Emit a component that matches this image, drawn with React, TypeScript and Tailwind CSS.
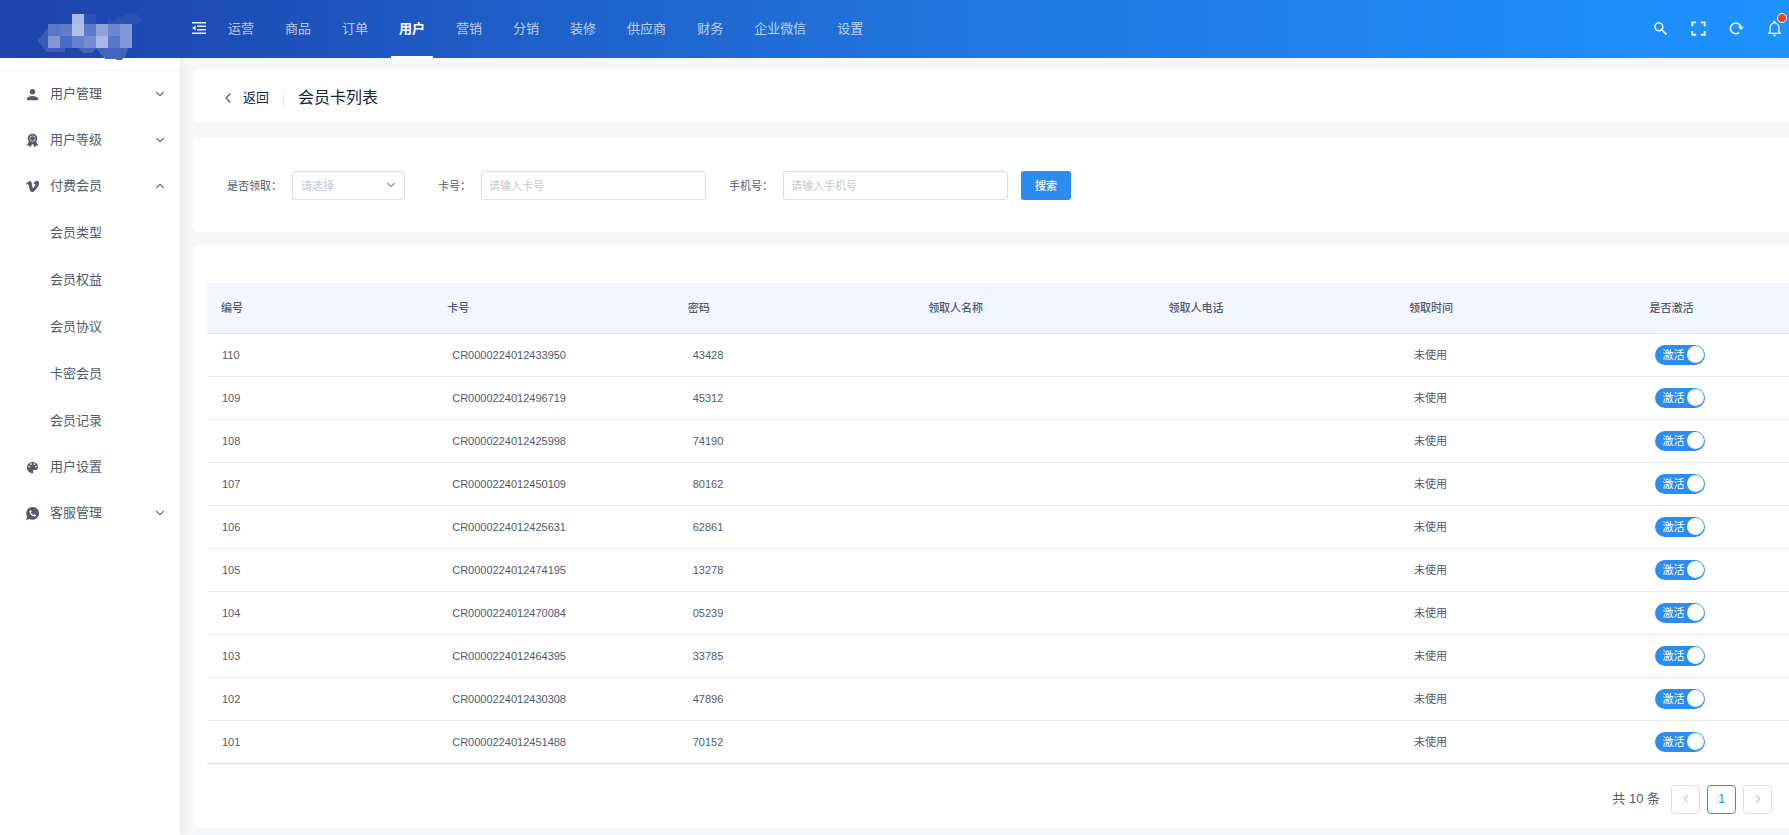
import { useState } from "react";
import {
  IoMdPerson,
  IoLogoVimeo,
  IoMdColorPalette,
  IoLogoWhatsapp,
  IoIosArrowDown,
  IoIosArrowUp,
  IoIosArrowBack,
  IoIosArrowForward,
  IoMdSearch,
  IoMdExpand,
  IoMdNotificationsOutline,
} from "react-icons/io";

const navItems = ["运营", "商品", "订单", "用户", "营销", "分销", "装修", "供应商", "财务", "企业微信", "设置"];

function RibbonIcon({ size }: { size: number }) {
  return (
    <svg width={size} height={size} viewBox="0 0 14 14" fill="currentColor" aria-hidden="true">
      <path d="M3.6 8.2L1.4 12L3.6 11.7L4.8 13.4L7 10L9.2 13.4L10.4 11.7L12.6 12L10.4 8.2Z" />
      <circle cx="7" cy="5.2" r="4.5" />
      <circle cx="7" cy="5.2" r="2.5" fill="none" stroke="#fff" strokeOpacity="0.75" strokeWidth="0.8" />
    </svg>
  );
}

const menu = [
  { label: "用户管理", icon: IoMdPerson, arrow: "down" },
  { label: "用户等级", icon: RibbonIcon, arrow: "down" },
  {
    label: "付费会员",
    icon: IoLogoVimeo,
    arrow: "up",
    children: ["会员类型", "会员权益", "会员协议", "卡密会员", "会员记录"],
  },
  { label: "用户设置", icon: IoMdColorPalette, arrow: "" },
  { label: "客服管理", icon: IoLogoWhatsapp, arrow: "down" },
];

const cards = [
  { id: 110, no: "CR0000224012433950", pwd: "43428" },
  { id: 109, no: "CR0000224012496719", pwd: "45312" },
  { id: 108, no: "CR0000224012425998", pwd: "74190" },
  { id: 107, no: "CR0000224012450109", pwd: "80162" },
  { id: 106, no: "CR0000224012425631", pwd: "62861" },
  { id: 105, no: "CR0000224012474195", pwd: "13278" },
  { id: 104, no: "CR0000224012470084", pwd: "05239" },
  { id: 103, no: "CR0000224012464395", pwd: "33785" },
  { id: 102, no: "CR0000224012430308", pwd: "47896" },
  { id: 101, no: "CR0000224012451488", pwd: "70152" },
];

const logoCells: [number, number, number, number, string][] = [
  [72, 14, 12, 10, "#a9b8e6"],
  [84, 14, 12, 10, "#2c52b6"],
  [48, 24, 12, 12, "#5b78c8"],
  [60, 24, 12, 12, "#607dcb"],
  [72, 24, 12, 12, "#b0bee8"],
  [84, 24, 12, 12, "#5d7bca"],
  [96, 24, 12, 12, "#8fa3da"],
  [108, 24, 12, 12, "#6c86d0"],
  [120, 24, 12, 12, "#8098d6"],
  [48, 36, 12, 12, "#8296d5"],
  [60, 36, 12, 12, "#4b6bc3"],
  [72, 36, 12, 12, "#6682cd"],
  [84, 36, 12, 12, "#738cd1"],
  [96, 36, 12, 12, "#a8b7e5"],
  [108, 36, 12, 12, "#5877c8"],
  [120, 36, 12, 12, "#8299d7"],
];

function Logo() {
  return (
    <svg className="h-[62px] w-[180px] shrink-0 self-start" viewBox="0 0 180 62" shapeRendering="crispEdges" aria-label="Logo" role="img">
      <path d="M38 40L50 26L54 24V48H65V52H46L45 50L42 47Z" fill="#3a5cb9" />
      <path d="M108 24V19L112 22L118 17L124 17L126 14L132 13L138 15L141 20V23L132 24Z" fill="#2c51b5" />
      <path d="M65 44L78 48L84 53H91L96 48L100 53L105 59H115L116 60H121L126 55L128 48L132 46V44Z" fill="#4465bf" />
      {logoCells.map(([x, y, w, h, fill]) => (
        <rect key={`${x}-${y}`} x={x} y={y} width={w} height={h} fill={fill} />
      ))}
    </svg>
  );
}

function CollapseIcon() {
  return (
    <svg width="14" height="12" viewBox="0 0 14 12" fill="currentColor" aria-hidden="true">
      <path d="M0 0H14V1.6H0ZM5 3.5H14V5.1H5ZM5 7H14V8.6H5ZM0 10.4H14V12H0ZM0 6L3.6 3.4V8.6Z" />
    </svg>
  );
}

function RefreshIcon() {
  return (
    <svg width="15" height="14" viewBox="0 0 15 14" fill="none" aria-hidden="true">
      <path d="M10 11.6A5.3 5.3 0 1 1 12 6.6" stroke="currentColor" strokeWidth="1.5" />
      <path d="M9 5.8H15L12 9Z" fill="currentColor" />
    </svg>
  );
}

function ActiveSwitch({ id }: { id: number }) {
  const [on, setOn] = useState(true);
  return (
    <button
      type="button"
      role="switch"
      aria-checked={on}
      aria-label={`是否激活 ${id}`}
      onClick={() => setOn(!on)}
      className={
        on
          ? "flex h-5 w-[50px] items-center justify-between rounded-full bg-[#2d8cf0] pr-px pl-[7px] text-white"
          : "flex h-5 w-[50px] flex-row-reverse items-center justify-between rounded-full bg-[#c5c8ce] pr-[7px] pl-px text-white"
      }
    >
      <span>{on ? "激活" : "冻结"}</span>
      <span className="size-[17px] rounded-full bg-white" />
    </button>
  );
}

function Header() {
  return (
    <header className="relative z-10 flex h-[58px] shrink-0 bg-linear-to-r from-[#1d42ab] via-[#2173dc] to-[#1e93ff]">
      <Logo />
      <button type="button" aria-label="收起菜单" className="ml-3 flex w-[14px] items-center pb-0.5 text-white/90">
        <CollapseIcon />
      </button>
      <nav className="ml-[14px] flex gap-[15px]">
        {navItems.map((item) => (
          <a
            key={item}
            href="#"
            className={
              item === "用户"
                ? "flex items-center border-b-2 border-white px-2 pt-0.5 text-[13px] font-bold whitespace-nowrap text-white"
                : "flex items-center border-b-2 border-transparent px-2 pt-0.5 text-[13px] whitespace-nowrap text-white/70"
            }
          >
            {item}
          </a>
        ))}
      </nav>
      <div className="ml-auto flex items-center gap-[22px] pr-[7px] pb-0.5 text-white/95">
        <button type="button" aria-label="搜索菜单" className="flex size-4 items-center justify-center">
          <IoMdSearch size={17} className="shrink-0" />
        </button>
        <button type="button" aria-label="全屏" className="flex size-4 items-center justify-center">
          <IoMdExpand size={19} className="shrink-0" />
        </button>
        <button type="button" aria-label="刷新" className="flex size-4 items-center justify-center">
          <RefreshIcon />
        </button>
        <button type="button" aria-label="通知" className="relative flex size-4 items-center justify-center">
          <IoMdNotificationsOutline size={19} className="shrink-0" />
          <span className="absolute -top-[7px] left-[11px] size-[10px] rounded-full border border-white bg-[#ed4014]" />
        </button>
      </div>
    </header>
  );
}

function Sidebar() {
  return (
    <aside className="z-[5] w-[180px] shrink-0 bg-white pt-3 text-[13px] text-[#515a6e] shadow-[2px_0_10px_rgba(29,35,41,0.08)]">
      <ul className="border-t border-[#f3f4f6]">
        {menu.map(({ label, icon: Icon, arrow, children }) => (
          <li key={label}>
            <a href="#" className="flex h-[46px] items-center pr-[14px] pl-[25px]">
              <Icon size={15} />
              <span className="ml-[10px] flex-1">{label}</span>
              {arrow === "down" && <IoIosArrowDown size={12} />}
              {arrow === "up" && <IoIosArrowUp size={12} />}
            </a>
            {children && (
              <ul>
                {children.map((child) => (
                  <li key={child}>
                    <a href="#" className="flex h-[47px] items-center pl-[50px]">
                      {child}
                    </a>
                  </li>
                ))}
              </ul>
            )}
          </li>
        ))}
      </ul>
    </aside>
  );
}

function FilterForm() {
  const field =
    "h-[29px] w-[225px] rounded-[3px] border border-[#dcdee2] bg-white px-[7px] outline-none placeholder:text-[#c5c8ce]";
  return (
    <form
      onSubmit={(e) => e.preventDefault()}
      className="flex items-start rounded-l-[5px] bg-white pt-[33px] pb-8 pl-[34px] whitespace-nowrap"
    >
      <div className="flex items-center gap-[10px]">
        <label htmlFor="received">是否领取：</label>
        <div className="relative">
          <select
            id="received"
            defaultValue=""
            className="h-[29px] w-[113px] appearance-none rounded-[3px] border border-[#dcdee2] bg-white px-2 text-[#c5c8ce] outline-none"
          >
            <option value="">请选择</option>
            <option value="1">已领取</option>
            <option value="0">未领取</option>
          </select>
          <IoIosArrowDown size={12} className="pointer-events-none absolute top-2 right-2 text-[#808695]" />
        </div>
      </div>
      <div className="ml-[33px] flex items-center gap-[10px]">
        <label htmlFor="cardNo">卡号：</label>
        <input id="cardNo" type="text" placeholder="请输入卡号" className={field} />
      </div>
      <div className="ml-[23px] flex items-center gap-[10px]">
        <label htmlFor="phone">手机号：</label>
        <input id="phone" type="text" placeholder="请输入手机号" className={field} />
      </div>
      <button type="submit" className="ml-[13px] h-[29px] w-[50px] rounded-[3px] bg-[#2d8cf0] font-medium text-white">
        搜索
      </button>
    </form>
  );
}

function CardTable() {
  return (
    <table className="w-full table-fixed border-collapse text-left">
      <thead>
        <tr className="h-[50px] border-b border-[#e8eaec] bg-[#f2f7ff]">
          <th className="w-[14.3%] pl-[14px] font-medium">编号</th>
          <th className="w-[15.2%] pl-[14px] font-medium">卡号</th>
          <th className="w-[15.2%] pl-[14px] font-medium">密码</th>
          <th className="w-[15.2%] pl-[14px] font-medium">领取人名称</th>
          <th className="w-[15.2%] pl-[14px] font-medium">领取人电话</th>
          <th className="w-[15.2%] pl-[14px] font-medium">领取时间</th>
          <th className="pl-[14px] font-medium">是否激活</th>
        </tr>
      </thead>
      <tbody>
        {cards.map((card) => (
          <tr key={card.id} className="h-[43px] border-b border-[#e8eaec] last:border-[#dcdee2]">
            <td className="pl-[15px]">{card.id}</td>
            <td className="pl-[19px]">{card.no}</td>
            <td className="pl-[19px]">{card.pwd}</td>
            <td />
            <td />
            <td className="pl-[19px]">未使用</td>
            <td className="pl-5">
              <ActiveSwitch id={card.id} />
            </td>
          </tr>
        ))}
      </tbody>
    </table>
  );
}

function Pagination() {
  const box = "flex size-[29px] items-center justify-center rounded-[4px] border bg-white";
  return (
    <div className="mt-[21px] flex items-center justify-end gap-[7px] pr-[17px] text-[13px]">
      <span className="mr-1">共 10 条</span>
      <button type="button" disabled aria-label="上一页" className={`${box} border-[#dcdee2] text-[#c5c8ce]`}>
        <IoIosArrowBack size={12} />
      </button>
      <button type="button" aria-current="page" className={`${box} border-[#2d8cf0] text-[#2d8cf0]`}>
        1
      </button>
      <button type="button" disabled aria-label="下一页" className={`${box} border-[#dcdee2] text-[#c5c8ce]`}>
        <IoIosArrowForward size={12} />
      </button>
    </div>
  );
}

export default function App() {
  return (
    <div className="flex min-h-screen flex-col bg-[#f5f7f9] font-['Liberation_Sans','Noto_Sans_CJK_SC',sans-serif] text-[11px] leading-4 text-[#515a6e]">
      <Header />
      <div className="flex flex-1">
        <Sidebar />
        <main className="min-w-0 flex-1 pt-3 pb-[7px] pl-[13px]">
          <div className="flex h-[53px] items-center rounded-l-[5px] bg-white pt-0.5 pl-7">
            <a href="#" className="flex items-center text-[13px] text-[#17233d]">
              <IoIosArrowBack size={14} className="mr-2 text-[#515a6e]" />
              返回
            </a>
            <span className="mx-[14px] h-4 w-px bg-[#e8eaec]" />
            <h1 className="text-base text-[#17233d]">会员卡列表</h1>
          </div>
          <div className="mt-[15px]">
            <FilterForm />
          </div>
          <section className="mt-[14px] rounded-l-[5px] bg-white pt-[37px] pb-[14px] pl-[14px]">
            <CardTable />
            <Pagination />
          </section>
        </main>
      </div>
    </div>
  );
}
